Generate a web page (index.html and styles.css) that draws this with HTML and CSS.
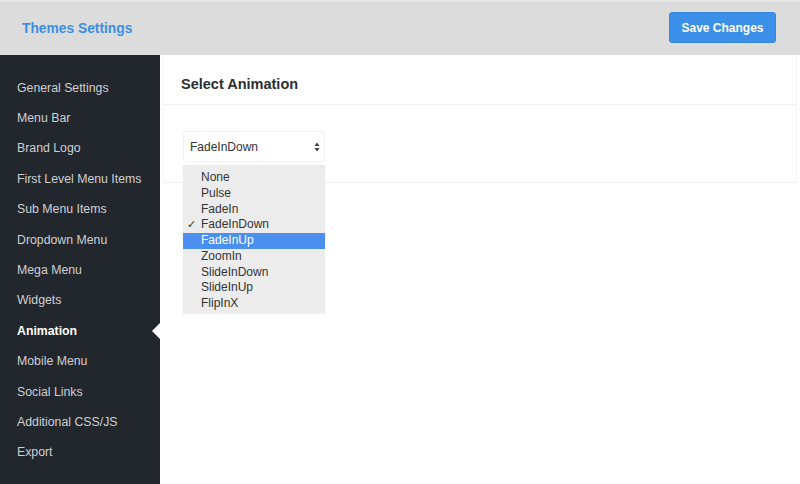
FILE: index.html
```html
<!DOCTYPE html>
<html>
<head>
<meta charset="utf-8">
<link rel="stylesheet" href="styles.css">
</head>
<body>
<header class="topbar">
  <div class="brand">Themes Settings</div>
  <button class="save">Save Changes</button>
</header>
<div class="layout">
  <nav class="sidebar">
    <a class="item">General Settings</a>
    <a class="item">Menu Bar</a>
    <a class="item">Brand Logo</a>
    <a class="item">First Level Menu Items</a>
    <a class="item">Sub Menu Items</a>
    <a class="item">Dropdown Menu</a>
    <a class="item">Mega Menu</a>
    <a class="item">Widgets</a>
    <a class="item active">Animation</a>
    <a class="item">Mobile Menu</a>
    <a class="item">Social Links</a>
    <a class="item">Additional CSS/JS</a>
    <a class="item">Export</a>
  </nav>
  <main class="main">
    <section class="panel">
      <div class="panel-head">Select Animation</div>
      <div class="panel-body">
        <div class="select-wrap">
          <div class="select">
            <span>FadeInDown</span>
            <svg class="arrows" width="6" height="10" viewBox="0 0 6 10"><path d="M3 0.5 L5.6 4 H0.4 Z M3 9.5 L5.6 6 H0.4 Z" fill="#444"/></svg>
          </div>
          <ul class="dropdown">
            <li>None</li>
            <li>Pulse</li>
            <li>FadeIn</li>
            <li class="checked">FadeInDown</li>
            <li class="hl">FadeInUp</li>
            <li>ZoomIn</li>
            <li>SlideInDown</li>
            <li>SlideInUp</li>
            <li>FlipInX</li>
          </ul>
        </div>
      </div>
    </section>
  </main>
</div>
</body>
</html>
```
FILE: styles.css
```css
* { box-sizing: border-box; }
html, body { margin: 0; padding: 0; }
body {
  width: 800px;
  height: 484px;
  overflow: hidden;
  font-family: "Liberation Sans", Arial, sans-serif;
  background: #fff;
}
.topbar {
  height: 55px;
  background: #dcdcdc;
  border-top: 2px solid #e6e6e6;
  display: flex;
  align-items: center;
  justify-content: space-between;
  padding: 0 24px 0 22px;
}
.brand {
  color: #3b8ee3;
  font-weight: bold;
  font-size: 13.8px;
  margin-top: -1px;
}
.save {
  background: #3a8fe9;
  color: #fff;
  border: 1px solid #3488e0;
  border-radius: 3px;
  font-family: inherit;
  font-size: 12px;
  font-weight: bold;
  width: 107px;
  height: 31px;
  margin-top: -2px;
  padding: 0;
}
.layout {
  display: flex;
  height: 429px;
}
.sidebar {
  width: 160px;
  background: #22262d;
  padding-top: 17.5px;
  display: flex;
  flex-direction: column;
}
.item {
  position: relative;
  display: flex;
  align-items: center;
  height: 30.4px;
  padding-left: 17px;
  color: #cfd0d2;
  font-size: 12.3px;
}
.item.active {
  color: #fff;
  font-weight: bold;
}
.item.active::after {
  content: "";
  position: absolute;
  right: 0;
  top: 50%;
  margin-top: -8px;
  border-style: solid;
  border-width: 8px 8px 8px 0;
  border-color: transparent #fff transparent transparent;
}
.main {
  flex: 1;
  padding: 0 3px 0 3px;
}
.panel {
  border-left: 1px solid #f5f5f5;
  border-right: 1px solid #f3f3f3;
}
.panel-head {
  height: 50px;
  border-bottom: 1px solid #f1f1f1;
  padding: 21px 0 0 17px;
  font-size: 14.5px;
  font-weight: bold;
  color: #2c2f33;
}
.panel-body {
  height: 78px;
  border-bottom: 1px solid #f0f0f0;
  padding: 26px 0 0 19px;
}
.select-wrap {
  position: relative;
  width: 142px;
}
.select {
  height: 31px;
  background: #fff;
  border: 1px solid #f1f1f1;
  border-radius: 3px;
  display: flex;
  align-items: center;
  justify-content: space-between;
  padding: 0 4px 0 6px;
  font-size: 12px;
  color: #333;
}
.arrows { display: block; }
.dropdown {
  position: absolute;
  left: 0;
  top: 34px;
  width: 142px;
  margin: 0;
  padding: 5px 0 1px;
  list-style: none;
  background: #ececec;
  box-shadow: 0 1px 2px rgba(0,0,0,0.06);
}
.dropdown li {
  position: relative;
  height: 15.75px;
  line-height: 15.75px;
  padding-left: 18px;
  font-size: 12px;
  color: #333;
}
.dropdown li.checked::before {
  content: "\2713";
  position: absolute;
  left: 4px;
  font-size: 11px;
  font-family: "DejaVu Sans", sans-serif;
}
.dropdown li.hl {
  background: #4b8ff0;
  color: #fff;
}
```
